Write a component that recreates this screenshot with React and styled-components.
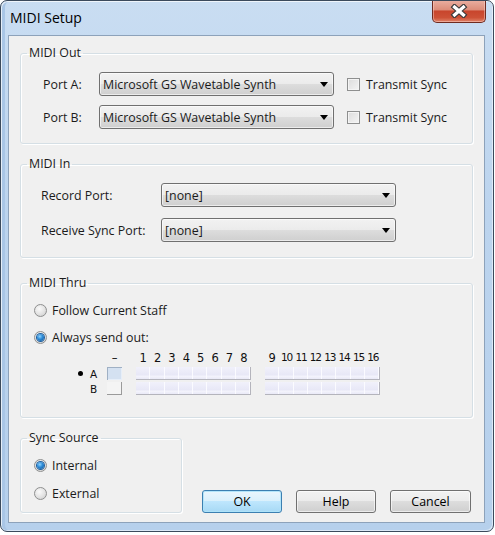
import React from "react";
import styled, { createGlobalStyle } from "styled-components";

const GlobalStyle = createGlobalStyle`
  html, body {
    margin: 0;
    padding: 0;
    background: #fff;
  }
  body {
    font-family: "Open Sans", "Noto Sans", sans-serif;
    font-size: 12.4px;
    color: #1b1b1b;
  }
`;

const Window = styled.div`
  width: 494px;
  height: 532px;
  box-sizing: border-box;
  border: 1px solid #3b4a5c;
  border-radius: 7px;
  background: linear-gradient(180deg, #c9ddf2 0%, #bcd4ee 40%, #b6d0ec 100%);
  box-shadow: inset 1px 1px 0 rgba(255, 255, 255, 0.7),
    inset -1px -1px 0 rgba(255, 255, 255, 0.5), inset 4px 0 0 #a9c6e6;
  display: flex;
  flex-direction: column;
  overflow: hidden;
`;

const TitleBar = styled.div`
  height: 34px;
  flex: none;
  display: flex;
  align-items: flex-start;
  justify-content: space-between;
  padding: 0 7px 0 9px;
`;

const Title = styled.div`
  font-size: 14px;
  line-height: 34px;
  color: #000;
`;

const CloseButton = styled.div`
  width: 54px;
  height: 23px;
  margin-top: -1px;
  box-sizing: border-box;
  border: 1px solid #6f2b20;
  border-top: none;
  border-radius: 0 0 5px 5px;
  background: linear-gradient(
    180deg,
    #eab0a2 0%,
    #dc8c79 45%,
    #c8452c 50%,
    #cd5136 80%,
    #e0846a 100%
  );
  box-shadow: inset 0 0 0 1px rgba(255, 220, 210, 0.45);
  display: flex;
  align-items: center;
  justify-content: center;
`;

const Client = styled.div`
  flex: 1;
  margin: 0 8px 8px 7px;
  border: 1px solid #8da2ba;
  background: #f0f0f0;
  padding: 9px 11px 0 11px;
  display: flex;
  flex-direction: column;
`;

const Group = styled.fieldset`
  margin: 0;
  margin-top: ${(p) => p.gap || 0}px;
  padding: 0;
  min-width: 0;
  box-sizing: border-box;
  width: ${(p) => p.w}px;
  height: ${(p) => p.h}px;
  border: 1px solid #d5dfe5;
  border-radius: 3px;
  box-shadow: inset 1px 1px 0 #fff, 1px 1px 0 #fff;
`;

const Legend = styled.legend`
  margin-left: 6px;
  padding: 0 2px;
  line-height: 16px;
  color: #1b1b1b;
`;

const GroupBody = styled.div`
  padding: ${(p) => p.top}px 0 0 ${(p) => p.left}px;
  display: flex;
  flex-direction: column;
  gap: ${(p) => p.rowGap}px;
`;

const Row = styled.div`
  display: flex;
  align-items: center;
  height: ${(p) => p.h || 24}px;
`;

const FieldLabel = styled.div`
  width: ${(p) => p.w}px;
  flex: none;
`;

const SelectBox = styled.div`
  width: 235px;
  height: 24px;
  box-sizing: border-box;
  border: 1px solid #707070;
  border-radius: 3px;
  background: linear-gradient(
    180deg,
    #f2f2f2 0%,
    #ebebeb 50%,
    #dddddd 50%,
    #cfcfcf 100%
  );
  box-shadow: inset 0 0 0 1px rgba(255, 255, 255, 0.6);
  display: flex;
  align-items: center;
  justify-content: space-between;
  padding: 0 5px 0 3px;
  flex: none;
`;

const Arrow = styled.span`
  width: 0;
  height: 0;
  border-left: 4px solid transparent;
  border-right: 4px solid transparent;
  border-top: 5px solid #000;
  margin-top: 1px;
`;

const CheckBox = styled.span`
  width: 13px;
  height: 13px;
  box-sizing: border-box;
  border: 1px solid #8e8f8f;
  background: linear-gradient(135deg, #dcdcdc 0%, #f4f4f4 100%);
  box-shadow: inset 0 0 0 1px #f4f4f4;
  margin: 0 6px 0 13px;
  flex: none;
`;

const Radio = styled.span`
  width: 13px;
  height: 13px;
  box-sizing: border-box;
  border-radius: 50%;
  border: 1px solid #8e8f8f;
  background: radial-gradient(circle at 40% 35%, #fafafa 0%, #e2e2e2 55%, #c9c9c9 100%);
  margin-right: 5px;
  flex: none;
  display: flex;
  align-items: center;
  justify-content: center;
  &::after {
    content: "";
    display: ${(p) => (p.checked ? "block" : "none")};
    width: 7px;
    height: 7px;
    border-radius: 50%;
    background: radial-gradient(circle at 40% 35%, #8fd3ff 0%, #2b8ad6 45%, #0d4f93 100%);
    box-shadow: 0 0 0 1px #1f5f9e;
  }
`;

const ThruGrid = styled.div`
  display: grid;
  grid-template-columns: 10px 19px 15px 14px 115px 14px 115px;
  grid-template-rows: 15px 13px 13px;
  row-gap: 2px;
  margin: 3px 0 0 57px;
  font-family: "DejaVu Sans", sans-serif;
  font-size: 11px;
  color: #111;
  align-items: center;
`;

const Marker = styled.span`
  width: 5px;
  height: 5px;
  border-radius: 50%;
  background: #000;
`;

const Letter = styled.span`
  padding-left: 2px;
  font-size: 10.5px;
`;

const DashBox = styled.span`
  height: 13px;
  box-sizing: border-box;
  ${(p) =>
    p.active
      ? `background: #d4e1f1;
         border-top: 1px solid #9fb0c4;
         border-left: 1px solid #9fb0c4;
         box-shadow: inset -1px -1px 0 #e6eef8;`
      : `background: #f4f4f4;
         border-right: 1px solid #9a9a9a;
         border-bottom: 1px solid #9a9a9a;`}
`;

const NumStrip = styled.div`
  display: flex;
  grid-column: ${(p) => p.col};
`;

const Num = styled.span`
  flex: 1;
  text-align: center;
  letter-spacing: ${(p) => (p.wide ? "-1.2px" : "0")};
  font-size: ${(p) => (p.wide ? "10.5px" : "11.5px")};
`;

const CellStrip = styled.div`
  display: flex;
  height: 13px;
  grid-column: ${(p) => p.col};
  border-right: 1px solid #b4b4bc;
  border-bottom: 1px solid #b4b4bc;
  box-sizing: border-box;
`;

const Cell = styled.span`
  flex: 1;
  background: linear-gradient(180deg, #f1f1fb 0%, #e7e7f6 70%, #f6f6fd 72%, #e9e9f7 100%);
  box-shadow: inset -1px 0 0 #fbfbff;
`;

const BottomRow = styled.div`
  display: flex;
  align-items: flex-end;
  margin-top: 12px;
`;

const Buttons = styled.div`
  display: flex;
  gap: 14px;
  margin-left: 20px;
`;

const Button = styled.div`
  width: ${(p) => p.w || 80}px;
  height: 23px;
  box-sizing: border-box;
  border: 1px solid ${(p) => (p.primary ? "#3c7fb1" : "#707070")};
  border-radius: 3px;
  background: ${(p) =>
    p.primary
      ? "linear-gradient(180deg, #eaf6fd 0%, #d9f0fc 50%, #bee6fd 50%, #a7d9f5 100%)"
      : "linear-gradient(180deg, #f2f2f2 0%, #ebebeb 50%, #dddddd 50%, #cfcfcf 100%)"};
  box-shadow: inset 0 0 0 1px
    ${(p) => (p.primary ? "rgba(174, 227, 249, 0.9)" : "rgba(255, 255, 255, 0.6)")};
  display: flex;
  align-items: center;
  justify-content: center;
  color: #000;
`;

const Select = ({ value }) => (
  <SelectBox>
    <span>{value}</span>
    <Arrow />
  </SelectBox>
);

const RadioRow = ({ checked, children }) => (
  <Row h={20}>
    <Radio checked={checked} />
    <span>{children}</span>
  </Row>
);

const channels1 = [1, 2, 3, 4, 5, 6, 7, 8];
const channels2 = [9, 10, 11, 12, 13, 14, 15, 16];

const Strip = ({ col }) => (
  <CellStrip col={col}>
    {channels1.map((c) => (
      <Cell key={c} />
    ))}
  </CellStrip>
);

export default function App() {
  return (
    <>
      <GlobalStyle />
      <Window>
        <TitleBar>
          <Title>MIDI Setup</Title>
          <CloseButton>
            <svg width="18" height="14" viewBox="0 0 18 14">
              <path
                d="M4.5 3 L13.5 11 M13.5 3 L4.5 11"
                stroke="#3a3a3a"
                strokeWidth="5.5"
                strokeLinecap="square"
              />
              <path
                d="M4.5 3 L13.5 11 M13.5 3 L4.5 11"
                stroke="#fff"
                strokeWidth="3.2"
                strokeLinecap="square"
              />
            </svg>
          </CloseButton>
        </TitleBar>
        <Client>
          <Group w={453} h={99}>
            <Legend>MIDI Out</Legend>
            <GroupBody top={11} left={22} rowGap={9}>
              <Row>
                <FieldLabel w={56}>Port A:</FieldLabel>
                <Select value="Microsoft GS Wavetable Synth" />
                <CheckBox />
                <span>Transmit Sync</span>
              </Row>
              <Row>
                <FieldLabel w={56}>Port B:</FieldLabel>
                <Select value="Microsoft GS Wavetable Synth" />
                <CheckBox />
                <span>Transmit Sync</span>
              </Row>
            </GroupBody>
          </Group>

          <Group w={453} h={102} gap={12}>
            <Legend>MIDI In</Legend>
            <GroupBody top={11} left={20} rowGap={11}>
              <Row>
                <FieldLabel w={120}>Record Port:</FieldLabel>
                <Select value="[none]" />
              </Row>
              <Row>
                <FieldLabel w={120}>Receive Sync Port:</FieldLabel>
                <Select value="[none]" />
              </Row>
            </GroupBody>
          </Group>

          <Group w={453} h={143} gap={17}>
            <Legend>MIDI Thru</Legend>
            <GroupBody top={9} left={13} rowGap={7}>
              <RadioRow>Follow Current Staff</RadioRow>
              <RadioRow checked>Always send out:</RadioRow>
            </GroupBody>
            <ThruGrid>
              <span />
              <span />
              <Num>–</Num>
              <span />
              <NumStrip col={5}>
                {channels1.map((c) => (
                  <Num key={c}>{c}</Num>
                ))}
              </NumStrip>
              <span />
              <NumStrip col={7}>
                {channels2.map((c) => (
                  <Num key={c} wide={c > 9}>
                    {c}
                  </Num>
                ))}
              </NumStrip>

              <Marker />
              <Letter>A</Letter>
              <DashBox active />
              <span />
              <Strip col={5} />
              <span />
              <Strip col={7} />

              <span />
              <Letter>B</Letter>
              <DashBox />
              <span />
              <Strip col={5} />
              <span />
              <Strip col={7} />
            </ThruGrid>
          </Group>

          <BottomRow>
            <Group w={162} h={83}>
              <Legend>Sync Source</Legend>
              <GroupBody top={9} left={13} rowGap={8}>
                <RadioRow checked>Internal</RadioRow>
                <RadioRow>External</RadioRow>
              </GroupBody>
            </Group>
            <Buttons>
              <Button primary>OK</Button>
              <Button>Help</Button>
              <Button w={81}>Cancel</Button>
            </Buttons>
          </BottomRow>
        </Client>
      </Window>
    </>
  );
}
